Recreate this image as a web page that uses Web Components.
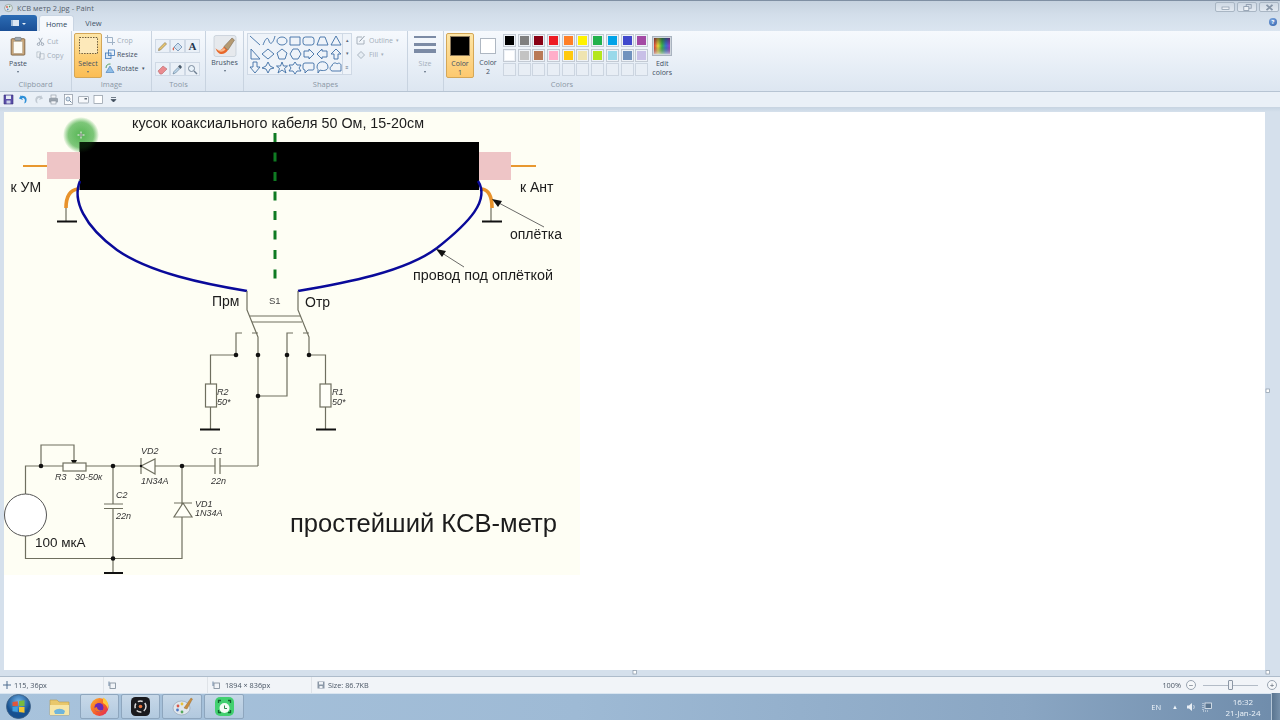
<!DOCTYPE html>
<html>
<head>
<meta charset="utf-8">
<title>Paint</title>
<style>
  html, body { margin: 0; padding: 0; width: 1280px; height: 720px; overflow: hidden; background: #d3deea; }
</style>
</head>
<body>
<paint-window>
  <title-bar></title-bar>
  <ribbon-tabs></ribbon-tabs>
  <paint-ribbon></paint-ribbon>
  <quick-bar></quick-bar>
  <paint-canvas></paint-canvas>
  <status-bar></status-bar>
  <win-taskbar></win-taskbar>
</paint-window>

<script>
const uiFont = `font-family: "Open Sans", "Liberation Sans", sans-serif;`;

function define(name, css, html) {
    customElements.define(name, class extends HTMLElement {
        constructor() {
            super();
            const root = this.attachShadow({mode: 'open'});
            root.innerHTML = `<style>${css}</style>${html}`;
        }
    });
}

define('paint-window', `
    :host { display: flex; flex-direction: column; width: 1280px; height: 720px; filter: blur(.35px); ${uiFont} }
`, `<slot></slot>`);

define('title-bar', `
    :host { display: flex; align-items: center; height: 15px; box-sizing: border-box; border-top: 1px solid #7f8fa3;
            background: linear-gradient(#c6d2df, #d3deea); font-size: 7.500px; color: #55606c; padding-left: 4px; gap: 4px; }
    span { flex: 1; }
    .btns { display: flex; gap: 2px; margin: 0 1px 3px 0; align-self: flex-end; }
    .btn { width: 20px; height: 10px; box-sizing: border-box; border: 1px solid #a9b6c4; border-radius: 2px;
           background: linear-gradient(#cfd9e4, #e2e9f1); display: flex; align-items: center; justify-content: center; }
    .btn svg { width: 9px; height: 7px; }
`, `
    <svg width="9" height="10" viewBox="0 0 9 10"><ellipse cx="4.500" cy="5" rx="4" ry="3.600" fill="#dfe6ea" stroke="#8b9a8e" stroke-width=".7"/><circle cx="3" cy="4" r=".9" fill="#d7594b"/><circle cx="5.600" cy="3.600" r=".8" fill="#4f9f56"/><circle cx="3.800" cy="6.400" r=".8" fill="#4f79c4"/></svg>
    <span>КСВ метр 2.jpg - Paint</span>
    <div class="btns">
        <div class="btn"><svg viewBox="0 0 9 7"><rect x="1" y="3" width="7" height="2.400" fill="#eef2f6" stroke="#8796a8" stroke-width=".7"/></svg></div>
        <div class="btn"><svg viewBox="0 0 9 7"><rect x="3.200" y=".6" width="5" height="3.600" fill="none" stroke="#8796a8" stroke-width=".8"/><rect x=".8" y="2.600" width="5" height="3.800" fill="#eef2f6" stroke="#8796a8" stroke-width=".8"/></svg></div>
        <div class="btn"><svg viewBox="0 0 9 7"><path d="M1.500 .8L7.500 6.200M7.500 .8L1.500 6.200" stroke="#8796a8" stroke-width="1.800"/></svg></div>
    </div>
`);

define('ribbon-tabs', `
    :host { display: flex; align-items: stretch; height: 16px; background: linear-gradient(#d3deea, #dbe5f0); font-size: 7.500px; color: #44556a; }
    .file { width: 37px; background: linear-gradient(#2c6cb4, #1a4f96); border-radius: 3px 3px 0 0; display: flex; align-items: center; justify-content: center; gap: 3px; }
    .file i { width: 8px; height: 6px; background: #dbe6f2; border-left: 2px solid #9db9d8; box-sizing: border-box; }
    .file b { border: 2.200px solid transparent; border-top: 2.600px solid #e8f0f8; margin-top: 3px; width: 0; height: 0; }
    .home { margin-left: 2px; width: 35px; background: #f6f9fd; border: 1px solid #c9d5e3; border-bottom: 0; border-radius: 3px 3px 0 0; box-sizing: border-box;
            display: flex; align-items: center; justify-content: center; color: #2c4560; }
    .view { width: 39px; display: flex; align-items: center; justify-content: center; }
    .fill { flex: 1; }
    .help { width: 8px; height: 8px; border-radius: 50%; background: radial-gradient(circle at 40% 30%, #7fa8e0, #2b5eaa); margin: 3px 3px 0 0; color: #fff; font-size: 6px; line-height: 8px; text-align: center; font-weight: bold; }
`, `
    <div class="file"><i></i><b></b></div>
    <div class="home">Home</div>
    <div class="view">View</div>
    <div class="fill"></div>
    <div class="help">?</div>
`);

class RibbonGroup extends HTMLElement {
    constructor() {
        super();
        this.attachShadow({mode: 'open'}).innerHTML = `
            <style>
                :host { display: flex; flex-direction: column; flex: none; box-sizing: border-box; height: 60px; border-right: 1px solid #c8d3e0; font-size: 7px; color: #3f4f63; }
                .body { flex: 1; display: flex; min-height: 0; }
                .label { height: 12px; line-height: 10px; text-align: center; color: #8b97a5; font-size: 7.500px; }
            </style>
            <div class="body"><slot></slot></div><div class="label"></div>`;
    }

    connectedCallback() {
        this.shadowRoot.querySelector('.label').textContent = this.getAttribute('label');
    }
}
customElements.define('ribbon-group', RibbonGroup);

define('small-tool', `
    :host { display: flex; align-items: center; gap: 2px; height: 14px; font-size: 7px; color: #3f4f63; white-space: nowrap; }
    :host([off]) { color: #a3aeba; }
`, `<slot></slot>`);

define('big-tool', `
    :host { display: flex; flex-direction: column; align-items: center; font-size: 7px; color: #3f4f63; line-height: 9px; text-align: center; box-sizing: border-box; }
    .arrow { width: 0; height: 0; border: 1.800px solid transparent; border-top: 2.200px solid #55657a; margin-top: 3px; }
`, `<slot></slot><div class="arrow"></div>`);

define('color-grid', `
    :host { display: grid; grid-template-columns: repeat(10, 13px); grid-auto-rows: 13px; gap: 1.500px 1.700px; margin: 3px 0 0 3px; }
    i { display: block; box-sizing: border-box; border: 1px solid #c3cad3; outline: 1px solid #eef2f7; outline-offset: -2px; }
    i.e { background: #e8eef5; border-color: #ccd5e0; outline: 0; }
`, [
    '#000000','#7f7f7f','#880015','#ed1c24','#ff7f27','#fff200','#22b14c','#00a2e8','#3f48cc','#a349a4',
    '#ffffff','#c3c3c3','#b97a57','#ffaec9','#ffc90e','#efe4b0','#b5e61d','#99d9ea','#7092be','#c8bfe7'
].map(c => `<i style="background:${c}"></i>`).join('') + '<i class="e"></i>'.repeat(10));

define('shape-gallery', `
    :host { display: flex; width: 105px; height: 42px; box-sizing: border-box; border: 1px solid #cfd9e5; background: #eef3f9; margin: 2px 0 0 3px; }
    svg { width: 94px; height: 40px; }
    .sb { flex: 1; border-left: 1px solid #cfd9e5; display: flex; flex-direction: column; align-items: center; justify-content: space-around; color: #5b6b80; font-size: 5px; line-height: 5px; }
    g { fill: none; stroke: #3d6ea5; stroke-width: .9; stroke-linejoin: round; }
`, `
    <svg viewBox="0 0 94 40"><g>
      <path d="M2 2L12 11"/>
      <path d="M15 11C18 3 20 3 21 7S25 10 27 2"/>
      <ellipse cx="34" cy="7" rx="5" ry="4"/>
      <rect x="42" y="3" width="10" height="8"/>
      <rect x="55" y="3" width="11" height="8" rx="2.500"/>
      <path d="M69 11L72 3H77L80 11Z"/>
      <path d="M83 11L88 2L93 11Z"/>
      <path d="M3 15V25H12Z"/>
      <path d="M20 15L26 20L20 25L14 20Z"/>
      <path d="M34 15L39 19L37 25H31L29 19Z"/>
      <path d="M45 15H50L53 20L50 25H45L42 20Z"/>
      <path d="M56 17H61V15L66 20L61 25V23H56Z"/>
      <path d="M79 17H74V15L69 20L74 25V23H79Z"/>
      <path d="M88 15L93 20H90V25H86V20H83Z"/>
      <path d="M5 28V33H2L7 39L12 33H9V28Z"/>
      <path d="M20 28L22 32L26 34L22 35L20 39L18 35L14 34L18 32Z"/>
      <path d="M34 28L35.500 32H39.500L36.500 34.500L38 39L34 36L30 39L31.500 34.500L28.500 32H32.500Z"/>
      <path d="M47 28L49 31H53L51 34L53 37H49L47 40L45 37H41L43 34L41 31H45Z"/>
      <path d="M57 29H65A1.500 1.500 0 0 1 66 31V35A1.500 1.500 0 0 1 65 36H60L57 39V36A2 2 0 0 1 55 34V31A2 2 0 0 1 57 29Z"/>
      <path d="M69 33C69 26 80 26 80 33C80 37 74 37 72 36L70 39V35.500C69.500 35 69 34 69 33Z"/>
      <path d="M84 37C81 36 82 32 84 32C84 29 88 28 89 30C91 28 93.500 30 93 32V37Z"/>
    </g></svg>
    <div class="sb"><span>▴</span><span>▾</span><span>≡</span></div>
`);

define('paint-ribbon', `
    :host { display: flex; height: 61px; box-sizing: border-box; border-bottom: 1px solid #b7c4d3; background: linear-gradient(#f6f9fd, #e4ecf5 70%, #dde6f1); }
    small-tool svg { width: 10px; height: 10px; flex: none; }
    small-tool svg.n { width: 9px; height: 9px; }
    .col { display: flex; flex-direction: column; }
    .paste { width: 36px; padding-top: 5px; }
    .paste svg { width: 22px; height: 20px; margin-bottom: 3px; }
    .select { width: 28px; height: 45px; margin: 2px 0 0 2px; border: 1px solid #d4a757; border-radius: 2px; background: linear-gradient(#fde6a8, #fdd17a 45%, #fbbd53); padding-top: 2px; }
    .select svg { width: 21px; height: 20px; margin-bottom: 3px; }
    .tools { display: grid; grid-template-columns: repeat(3, 15px); gap: 6px 0; margin: 8px 0 0 3px; }
    .tools div { height: 14px; background: #eaf0f7; border: 1px solid #cfd9e5; box-sizing: border-box; display: flex; align-items: center; justify-content: center; }
    .tools svg { width: 11px; height: 11px; }
    .brush { width: 38px; padding-top: 4px; }
    .brush svg { width: 24px; height: 22px; margin-bottom: 1px; }
    .size { width: 34px; padding-top: 5px; color: #a3aeba; }
    .size i { display: block; width: 22px; margin: 0 auto; background: #7c8ba5; flex: none; }
    .c1 { width: 28px; height: 45px; margin: 2px 0 0 2px; box-sizing: border-box; border: 1px solid #d4a757; border-radius: 2px; background: linear-gradient(#fde6a8, #fdc96f); padding-top: 2px; text-align: center; line-height: 9px; }
    .swatch { box-sizing: border-box; display: block; }
    .c2 { width: 24px; margin: 2px 0 0 2px; padding-top: 3px; height: 45px; text-align: center; line-height: 9px; }
    .edit { width: 28px; padding-top: 5px; text-align: center; line-height: 9px; align-items: center; }
    .edit svg { width: 20px; height: 20px; margin-bottom: 3px; }
    .rest { flex: 1; }
`, `
    <ribbon-group style="width:72px" label="Clipboard">
        <big-tool class="col paste">
            <svg viewBox="0 0 22 22"><rect x="3.500" y="3" width="15" height="18" rx="1" fill="#c9a679" stroke="#7d6344" stroke-width="1"/><rect x="6" y="6" width="10" height="13" fill="#fbfbf6" stroke="#a89a85" stroke-width=".5"/><rect x="7.500" y="1.500" width="7" height="3.500" rx="1" fill="#9fa7ae" stroke="#66707a" stroke-width=".6"/></svg>
            Paste
        </big-tool>
        <div class="col" style="margin-top:3px">
            <small-tool off><svg class="n" viewBox="0 0 10 10"><path d="M3 1L6.500 7M7 1L3.500 7" stroke="#99a4b1" fill="none"/><circle cx="2.800" cy="8" r="1.400" fill="none" stroke="#99a4b1"/><circle cx="7.200" cy="8" r="1.400" fill="none" stroke="#99a4b1"/></svg>Cut</small-tool>
            <small-tool off><svg class="n" viewBox="0 0 10 10"><path d="M1 1H5V7H1Z M4 3H9V9H4Z" fill="#eef2f6" stroke="#a8b2bd" stroke-width=".7"/></svg>Copy</small-tool>
        </div>
    </ribbon-group>
    <ribbon-group style="width:80px" label="Image">
        <big-tool class="select">
            <svg viewBox="0 0 21 20"><rect x="1.500" y="1.500" width="18" height="16" fill="#fde9ba" stroke="#6a5a3c" stroke-dasharray="1.500 1.200"/></svg>
            Select
        </big-tool>
        <div class="col" style="margin:2px 0 0 3px;width:44px">
            <small-tool off><svg viewBox="0 0 10 10"><path d="M2.500 0V7.500H10M0 2.500H7.500V10" fill="none" stroke="#9fb2c6"/></svg>Crop</small-tool>
            <small-tool><svg viewBox="0 0 10 10"><rect x=".5" y="4" width="5.500" height="5.500" fill="#dbe8f5" stroke="#3f78b8" stroke-width=".8"/><rect x="3.500" y="1" width="6" height="5.500" fill="none" stroke="#3f78b8" stroke-width=".8"/></svg>Resize</small-tool>
            <small-tool><svg viewBox="0 0 10 10"><path d="M1 9.500H9L5 3Z" fill="#8fbfe8" stroke="#3f78b8" stroke-width=".6"/><path d="M1 5C1 2 3 .8 5.500 1" fill="none" stroke="#5aa060"/></svg>Rotate&nbsp;<span style="font-size:5px">▾</span></small-tool>
        </div>
    </ribbon-group>
    <ribbon-group style="width:54px" label="Tools">
        <div class="tools">
            <div><svg viewBox="0 0 11 11"><path d="M1.500 9.500L2 7.500L8 1.500L9.500 3L3.500 9Z" fill="#e9c66f" stroke="#7b6a45" stroke-width=".6"/></svg></div>
            <div><svg viewBox="0 0 11 11"><path d="M2 6L6 2L10 6L6 10Z" fill="#cfe0ef" stroke="#5c7ea3" stroke-width=".7"/><path d="M2 6C0 7 .5 9 1.500 9.500C2.500 8.500 2 7 2 6Z" fill="#d9614c"/></svg></div>
            <div style="font:bold 11px 'Liberation Serif',serif;color:#24364f">A</div>
            <div><svg viewBox="0 0 11 11"><path d="M1 7L6 2L10 5L5 10H3Z" fill="#ea8b8f" stroke="#b7686b" stroke-width=".6"/></svg></div>
            <div><svg viewBox="0 0 11 11"><path d="M1 10L2 7.500L6 3.500L7.500 5L3.500 9Z" fill="#bcd6ea" stroke="#5e7b94" stroke-width=".6"/><path d="M6 2.500L8 .8L10 3L8.500 5Z" fill="#4a5b6c"/></svg></div>
            <div><svg viewBox="0 0 11 11"><circle cx="4.500" cy="4.500" r="3" fill="#e8f2fa" stroke="#6f8093" stroke-width=".9"/><path d="M7 7L10 10" stroke="#6f8093" stroke-width="1.400"/></svg></div>
        </div>
    </ribbon-group>
    <ribbon-group style="width:38px" label="">
        <big-tool class="brush">
            <svg viewBox="0 0 24 22"><rect x="1" y=".5" width="22" height="21" rx="2" fill="#e6e9ed" stroke="#b9c3cf" stroke-width=".6"/><path d="M2.500 13C5 17 9 15.500 11 11.500L15 15C11.500 20.500 5 21 2.500 13Z" fill="#e8672a"/><path d="M4 14C6 16 9 15 11 13L12.500 14.500C9.500 17.500 6 17.500 4 14Z" fill="#f7b98c"/><path d="M11 11.500L19 3L21.500 5L15 15Z" fill="#b59a72" stroke="#6f5f48" stroke-width=".5"/></svg>
            Brushes
        </big-tool>
    </ribbon-group>
    <ribbon-group style="width:164px" label="Shapes">
        <shape-gallery></shape-gallery>
        <div class="col" style="margin:2px 0 0 4px">
            <small-tool off style="gap:3px"><svg viewBox="0 0 10 10"><path d="M1 2H6M1 2V9H8V5" fill="none" stroke="#a8b2bd"/><path d="M3.500 6.500L8.500 1" stroke="#8f9aa6"/></svg>Outline <span style="font-size:5px">▾</span></small-tool>
            <small-tool off style="gap:3px"><svg viewBox="0 0 10 10"><path d="M1.500 6L5 2.500L8.500 6L5 9.500Z" fill="#e6edf4" stroke="#9aa6b3" stroke-width=".8"/></svg>Fill <span style="font-size:5px">▾</span></small-tool>
        </div>
    </ribbon-group>
    <ribbon-group style="width:36px" label="">
        <big-tool class="size">
            <i style="height:2px;margin-bottom:5px"></i><i style="height:3px;margin-bottom:3px"></i><i style="height:4px;margin-bottom:6px"></i>
            Size
        </big-tool>
    </ribbon-group>
    <ribbon-group style="width:236px;border-right:0" label="Colors">
        <div class="c1 col" style="align-items:center">
            <span class="swatch" style="width:20px;height:20px;background:#000;border:1px solid #8d7a5c;margin-bottom:3px"></span>
            Color<br>1
        </div>
        <div class="c2 col" style="align-items:center">
            <span class="swatch" style="width:16px;height:16px;background:#fff;border:1px solid #aeb7c2;margin:2px 0 4px"></span>
            Color<br>2
        </div>
        <color-grid></color-grid>
        <div class="edit col">
            <svg viewBox="0 0 20 20"><defs><linearGradient id="sp" x1="0" x2="1"><stop offset="0" stop-color="#e23b3b"/><stop offset=".25" stop-color="#e8d93c"/><stop offset=".5" stop-color="#38b54a"/><stop offset=".75" stop-color="#3a6fd8"/><stop offset="1" stop-color="#a03cc0"/></linearGradient><linearGradient id="sf" x1="0" x2="0" y1="0" y2="1"><stop offset="0" stop-color="#222" stop-opacity=".55"/><stop offset=".5" stop-color="#222" stop-opacity="0"/><stop offset="1" stop-color="#ddd" stop-opacity=".7"/></linearGradient></defs><rect x=".5" y=".5" width="19" height="19" fill="#cfd5dc" stroke="#a9b3bf"/><rect x="2" y="2" width="16" height="16" fill="url(#sp)"/><rect x="2" y="2" width="16" height="16" fill="url(#sf)"/></svg>
            Edit<br>colors
        </div>
    </ribbon-group>
    <div class="rest"></div>
`);

define('quick-bar', `
    :host { display: flex; align-items: center; height: 16px; padding-left: 3px; gap: 4px; background: #eaf0f7; border-bottom: 1px solid #c9d5e2; box-sizing: border-box; }
    svg { width: 11px; height: 11px; flex: none; }
`, `
    <svg viewBox="0 0 11 11"><path d="M1 1H10V10H1Z" fill="#5a4ea8" stroke="#36307a" stroke-width=".6"/><rect x="3" y="1.500" width="5" height="3.500" fill="#e6ecf4"/><rect x="3.500" y="6.500" width="4" height="3" fill="#c9cfe8"/></svg>
    <svg viewBox="0 0 11 11"><path d="M3 2C7 1 10 4 8 8.500L6 9.500C8 6 6.500 3.500 4 4L5 6L1 4.500L3 1Z" fill="#2e8fd8"/></svg>
    <svg viewBox="0 0 11 11"><path d="M8 2C4 1 1 4 3 8.500L5 9.500C3 6 4.500 3.500 7 4L6 6L10 4.500L8 1Z" fill="#c2cad3"/></svg>
    <svg viewBox="0 0 11 11"><rect x="3" y="1" width="5" height="3" fill="#f2f4f7" stroke="#8b95a0" stroke-width=".6"/><rect x="1" y="4" width="9" height="4.500" rx="1" fill="#9aa3ad"/><rect x="3" y="7" width="5" height="3" fill="#f2f4f7" stroke="#8b95a0" stroke-width=".6"/></svg>
    <svg viewBox="0 0 11 11"><rect x="1.500" y=".5" width="8" height="10" fill="#fbfcfd" stroke="#8b95a0" stroke-width=".7"/><circle cx="5" cy="5" r="2" fill="#dbe8f5" stroke="#66809a" stroke-width=".7"/><path d="M6.500 6.500L8.500 8.500" stroke="#66809a"/></svg>
    <svg viewBox="0 0 11 11"><rect x=".5" y="2.500" width="10" height="6.500" rx=".5" fill="#f6f8fb" stroke="#8b95a0" stroke-width=".7"/><rect x="6.500" y="4" width="2.500" height="1.500" fill="#66717d"/></svg>
    <svg viewBox="0 0 11 11"><rect x="1" y="1.500" width="8.500" height="8" fill="#fff" stroke="#8b95a0" stroke-width=".7"/></svg>
    <svg viewBox="0 0 11 11"><path d="M3 3.500H8M3 5.500H8L5.500 8Z" stroke="#3f4c5b" stroke-width=".7" fill="#3f4c5b"/></svg>
`);

define('paint-canvas', `
    :host { display: block; flex: none; height: 568px; position: relative; background: linear-gradient(#c9d6e4, #d5e0ec 4px); }
    .page { position: absolute; left: 4px; top: 4px; width: 1261px; height: 558px; background: #fff; }
    svg { position: absolute; left: 0; top: 0; }
    text { font-family: "Liberation Sans", Arial, sans-serif; fill: #1c1c1c; }
    .i { font-style: italic; font-size: 9px; fill: #333; }
    .w { fill: none; stroke: #6f6f5f; stroke-width: 1.200; }
    .d { fill: #111; }
    .g { stroke: #111; stroke-width: 2; }
    .h { fill: #fff; stroke: #8896a6; stroke-width: .7; }
`, `
    <div class="page"></div>
    <svg width="1280" height="568" viewBox="0 108 1280 568">
      <defs>
        <radialGradient id="glow"><stop offset="0" stop-color="#2fa52f" stop-opacity=".75"/><stop offset=".7" stop-color="#2fa52f" stop-opacity=".55"/><stop offset="1" stop-color="#2fa52f" stop-opacity="0"/></radialGradient>
      </defs>
      <rect x="4" y="112" width="576" height="463" fill="#fefef4"/>

      <!-- cursor highlight, the part over the cable is only faint -->
      <circle cx="81" cy="135" r="18" fill="url(#glow)"/>

      <!-- cable -->
      <rect x="79.500" y="142" width="399.500" height="48" fill="#000"/>
      <circle cx="81" cy="135" r="18" fill="url(#glow)" opacity=".3"/>
      <rect x="47" y="152" width="33" height="27" fill="#eec5c6"/>
      <rect x="479" y="152" width="32" height="28" fill="#eec5c6"/>
      <path d="M23 166H47M511 166H536" stroke="#e8982f" stroke-width="2"/>
      <path d="M275 133V280" stroke="#0f7a22" stroke-width="3" stroke-dasharray="9 10.500" fill="none"/>

      <!-- braid -->
      <path d="M78 189C70 190 66 196 66 208" fill="none" stroke="#e8922a" stroke-width="3.600"/>
      <path d="M482 189C489 190 492 197 492 208" fill="none" stroke="#e8922a" stroke-width="3.600"/>
      <path class="w" d="M66 208V221M491 208V221"/>
      <path class="g" d="M57 221.500H77M482 221.500H502"/>

      <!-- centre wire -->
      <path d="M80 181C72 200 84 226 117 250C150 273 205 284 247 291" fill="none" stroke="#0a0a9a" stroke-width="2.500"/>
      <path d="M478 181C490 200 470 222 437 248C405 272 345 283 298 291" fill="none" stroke="#0a0a9a" stroke-width="2.500"/>

      <!-- pointers -->
      <path d="M544 227L497 202" stroke="#444" stroke-width=".8"/>
      <path d="M492 199L502 201L498 207Z" fill="#111"/>
      <path d="M464 267L442 253" stroke="#444" stroke-width=".8"/>
      <path d="M436 249L446 251L442 257Z" fill="#111"/>

      <text x="132" y="128" font-size="14" textLength="292" lengthAdjust="spacingAndGlyphs">кусок коаксиального кабеля 50 Ом, 15-20см</text>
      <text x="10.500" y="192" font-size="14">к УМ</text>
      <text x="520" y="192" font-size="14">к Ант</text>
      <text x="510" y="239" font-size="14">оплётка</text>
      <text x="413" y="280" font-size="14" textLength="140" lengthAdjust="spacingAndGlyphs">провод под оплёткой</text>
      <text x="212" y="306" font-size="14">Прм</text>
      <text x="305" y="307" font-size="14">Отр</text>
      <text x="269" y="304" font-size="9.500" style="fill:#444">S1</text>

      <!-- switch -->
      <path class="w" d="M247 291V310L258 337V466M298 291V310L309 337V355"/>
      <path class="w" d="M250 316H300M252 322H302"/>
      <path class="w" d="M242 333H236V355M252 333H258M293 333H287V396H258M303 333H309"/>
      <path class="w" d="M236 355H210.500V384M210.500 407V429M309 355H325.500V384M325.500 407V429"/>
      <rect class="w" x="205.500" y="384" width="11" height="23" style="fill:#fffff8"/>
      <rect class="w" x="320" y="384" width="11" height="23" style="fill:#fffff8"/>
      <path class="g" d="M200 429.500H220M316 429.500H336"/>
      <g class="d"><circle cx="236" cy="355" r="2.300"/><circle cx="258" cy="355" r="2.300"/><circle cx="287" cy="355" r="2.300"/><circle cx="309" cy="355" r="2.300"/><circle cx="258" cy="396" r="2.300"/></g>
      <text class="i" x="217" y="395">R2</text><text class="i" x="217" y="405">50*</text>
      <text class="i" x="332" y="395">R1</text><text class="i" x="332" y="405">50*</text>

      <!-- detector -->
      <path class="w" d="M258 466H220M215 466H86M63 466H25.500V494M25.500 536V558.500H182V466M41 466V445H74V462M113 466V504M113 508V573"/>
      <path d="M74 466L71 460H77Z" fill="#111"/>
      <rect class="w" x="63" y="463" width="23" height="8" style="fill:#fffff8"/>
      <path class="w" d="M215 458V474M220 458V474M104 504H123M104 508.500H123"/>
      <path class="w" d="M141 458V474M141 466L155 459V474Z" style="fill:#fffff8"/>
      <path class="w" d="M174 503H192M183 503L174 517H192Z" style="fill:#fffff8"/>
      <circle cx="25.500" cy="515" r="21" fill="#fff" stroke="#555" stroke-width="1"/>
      <path class="g" d="M104 573H123"/>
      <g class="d"><circle cx="41" cy="466" r="2.300"/><circle cx="113" cy="466" r="2.300"/><circle cx="182" cy="466" r="2.300"/><circle cx="113" cy="558.500" r="2.300"/><circle cx="141" cy="466" r="1.200"/></g>
      <text class="i" x="55" y="480">R3</text><text class="i" x="75" y="480">30-50к</text>
      <text class="i" x="141" y="454">VD2</text><text class="i" x="141" y="484">1N34A</text>
      <text class="i" x="211" y="454">C1</text><text class="i" x="211" y="484">22n</text>
      <text class="i" x="116" y="498">C2</text><text class="i" x="116" y="519">22n</text>
      <text class="i" x="195" y="507">VD1</text><text class="i" x="195" y="516">1N34A</text>
      <text x="35" y="547" font-size="13.500">100 мкА</text>
      <text x="290" y="532" font-size="25" textLength="267" lengthAdjust="spacingAndGlyphs">простейший КСВ-метр</text>

      <!-- pointer mark -->
      <path d="M81 131.500V138.500M77.500 135H84.500" stroke="#f4f4f4" stroke-width="1"/>
      <circle cx="81" cy="135" r="1.200" fill="none" stroke="#555" stroke-width=".6"/>

      <!-- resize handles -->
      <rect class="h" x="1266" y="389" width="3.500" height="3.500"/>
      <rect class="h" x="633" y="670.500" width="3.500" height="3.500"/>
      <rect class="h" x="1266" y="670.500" width="3.500" height="3.500"/>
    </svg>
`);

define('status-bar', `
    :host { display: flex; align-items: center; flex: none; height: 17px; box-sizing: border-box; border-top: 1px solid #aebccb; background: #f1f4f8; font-size: 7.300px; color: #4a5665; }
    .cell { display: flex; align-items: center; gap: 3px; height: 100%; box-sizing: border-box; border-right: 1px solid #dfe3e8; flex: none; padding-left: 3px; }
    .cell svg { width: 8px; height: 8px; flex: none; }
    .zoom { flex: 1; display: flex; align-items: center; justify-content: flex-end; height: 100%; gap: 5px; padding-right: 3px; }
    .track { width: 55px; height: 1px; background: #b3bcc7; position: relative; margin: 0 4px 0 2px; }
    .thumb { position: absolute; left: 25px; top: -5px; width: 5px; height: 10px; background: #eef1f5; border: 1px solid #8c97a5; box-sizing: border-box; border-radius: 1px; }
    .rnd { width: 10px; height: 10px; box-sizing: border-box; border: 1px solid #98a3b0; border-radius: 50%; background: #f6f8fa; display: flex; align-items: center; justify-content: center; color: #4a5665; font-size: 8px; line-height: 8px; }
`, `
    <div class="cell" style="width:104px"><svg viewBox="0 0 8 8"><path d="M4 0V8M0 4H8" stroke="#4f6d8f"/></svg>115, 36px</div>
    <div class="cell" style="width:104px;padding-left:4px"><svg viewBox="0 0 8 8"><rect x="2" y="2" width="5.500" height="5.500" fill="none" stroke="#7a8896" stroke-width=".8"/><path d="M1 .5V5" stroke="#4f6d8f" stroke-width=".8"/></svg></div>
    <div class="cell" style="width:104px;padding-left:4px"><svg viewBox="0 0 8 8"><rect x="2" y="2" width="5.500" height="5.500" fill="none" stroke="#7a8896" stroke-width=".8"/><path d="M1 .5V5" stroke="#4f6d8f" stroke-width=".8"/></svg>&nbsp;1894 × 836px</div>
    <div class="cell" style="border:0;padding-left:5px"><svg viewBox="0 0 8 8"><path d="M.5 .5H7.500V7.500H.5Z" fill="#8a97a6"/><rect x="2" y="1" width="4" height="2.500" fill="#eef1f5"/><rect x="2.500" y="5" width="3" height="2" fill="#eef1f5"/></svg>Size: 86.7KB</div>
    <div class="zoom">100%<div class="rnd">−</div><div class="track"><div class="thumb"></div></div><div class="rnd">+</div></div>
`);

define('win-taskbar', `
    :host { display: flex; align-items: center; flex: 1; min-height: 0; background: linear-gradient(90deg, #a8c3dc 0%, #9ebad5 45%, #8aa6c3 80%, #6f8cab 100%); box-shadow: inset 0 1px 0 #d9e5f0; color: #eef4fa; font-size: 7.500px; }
    .orb { width: 25px; height: 25px; margin-left: 6px; flex: none; }
    .item { width: 40px; height: 25px; flex: none; margin-right: 2px; box-sizing: border-box; display: flex; align-items: center; justify-content: center; }
    .item.on { border: 1px solid #8ea6be; border-radius: 2px; background: linear-gradient(rgba(255,255,255,.38), rgba(255,255,255,.14)); }
    .item svg { width: 21px; height: 21px; }
    .fill { flex: 1; }
    .tray { display: flex; align-items: center; height: 100%; }
    .clock { text-align: center; line-height: 11px; width: 40px; margin-left: 11px; font-size: 8px; }
    .show { width: 9px; height: 100%; margin-left: 8px; background: linear-gradient(90deg, #5a7590, #7690aa); border-left: 1px solid #b5c6d6; box-sizing: border-box; }
`, `
    <svg class="orb" viewBox="0 0 25 25">
      <defs><radialGradient id="o" cx=".5" cy=".3"><stop offset="0" stop-color="#6fb2e8"/><stop offset="1" stop-color="#17508f"/></radialGradient></defs>
      <circle cx="12.500" cy="12.500" r="12" fill="url(#o)" stroke="#3d5f83" stroke-width=".8"/>
      <path d="M6.500 8L11.800 7.200V12H6.500Z" fill="#e2553c"/><path d="M13 7L18.500 6.200V12H13Z" fill="#79bb3f"/><path d="M6.500 13H11.800V18L6.500 17.200Z" fill="#3f9fe0"/><path d="M13 13H18.500V18.800L13 18Z" fill="#f5c52f"/>
    </svg>
    <div class="item" style="margin-left:8px;margin-right:1px"><svg viewBox="0 0 21 21"><path d="M1 4H8L10 6H20V19H1Z" fill="#e9c86b" stroke="#b89a4e" stroke-width=".6"/><path d="M1 9H20V19H1Z" fill="#f7e6a6"/><path d="M5 15C8 12 13 12 16 15L15 18H6Z" fill="#6fb5dc"/></svg></div>
    <div class="item on" style="width:39px"><svg viewBox="0 0 21 21"><defs><linearGradient id="ff" x1="0" y1="0" x2="1" y2="1"><stop offset="0" stop-color="#ffb52c"/><stop offset=".6" stop-color="#f5562a"/><stop offset="1" stop-color="#d8246c"/></linearGradient></defs><circle cx="10.500" cy="11" r="9" fill="url(#ff)"/><path d="M14 1.500C19 4 20 9 19 13C18 10 16 8 14 7Z" fill="#ffc83a"/><circle cx="10" cy="11.500" r="4.500" fill="#6a2bb8"/><path d="M5 12C6 16 11 17 14 14C11 15 8 14 8 11Z" fill="#f5792a"/></svg></div>
    <div class="item on" style="width:39px"><svg viewBox="0 0 21 21"><rect x="1" y="1" width="19" height="19" rx="4.500" fill="#1a1a1e"/><circle cx="10.500" cy="10.500" r="5.500" fill="none" stroke="#dcdcdc" stroke-width="1.500" stroke-dasharray="5 2.500"/><circle cx="10.500" cy="10.500" r="1.800" fill="#e8743c"/></svg></div>
    <div class="item on"><svg viewBox="0 0 21 21"><ellipse cx="9.500" cy="12" rx="8.500" ry="7" fill="#dfe6ec" stroke="#8e9eae" stroke-width=".6"/><circle cx="6" cy="10" r="1.400" fill="#d9594c"/><circle cx="10" cy="8" r="1.400" fill="#e8c23c"/><circle cx="5.500" cy="14" r="1.400" fill="#4f79c4"/><circle cx="10" cy="16" r="1.400" fill="#55a85c"/><path d="M12 12L19 2L20.500 3L15 13Z" fill="#c98d3f" stroke="#8f6228" stroke-width=".4"/></svg></div>
    <div class="item on"><svg viewBox="0 0 21 21"><rect x="1" y="1" width="19" height="19" rx="5" fill="#42d070"/><path d="M4.500 7V4.500H7M14 4.500H16.500V7M4.500 14V16.500H7M14 16.500H16.500V14" fill="none" stroke="#10602c" stroke-width="1.300"/><circle cx="10.500" cy="12" r="5" fill="#f4fbf5"/><path d="M10.500 9.500V12.500H13" fill="none" stroke="#2a8a4a"/></svg></div>
    <div class="fill"></div>
    <div class="tray">
        <span>EN</span>
        <span style="font-size:6px;margin-left:11px">▲</span>
        <svg style="margin-left:8px" width="10" height="10" viewBox="0 0 10 10"><path d="M1 3.500H3L6 1V9L3 6.500H1Z" fill="#e8eef4"/><path d="M7.500 3C8.500 4.500 8.500 5.500 7.500 7" fill="none" stroke="#e8eef4" stroke-width=".7"/></svg>
        <svg style="margin-left:6px" width="10" height="10" viewBox="0 0 10 10"><rect x="3" y="1" width="6.500" height="5.500" fill="#5a7590" stroke="#e8eef4" stroke-width=".8"/><path d="M1 1V9H6" fill="none" stroke="#e8eef4" stroke-dasharray="1 1"/></svg>
        <div class="clock">16:32<br>21-Jan-24</div>
    </div>
    <div class="show"></div>
`);
</script>
</body>
</html>
